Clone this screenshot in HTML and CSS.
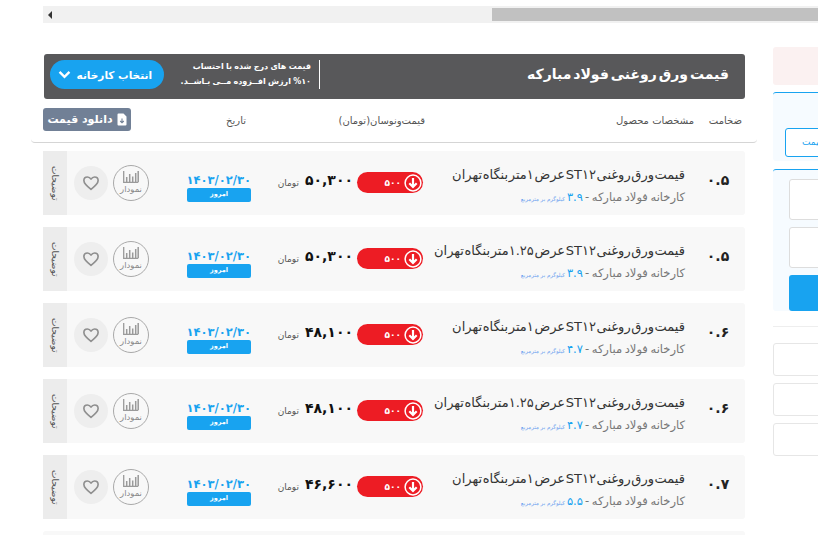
FILE: index.html
```html
<!DOCTYPE html>
<html lang="fa">
<head>
<meta charset="utf-8">
<title>قیمت ورق روغنی فولاد مبارکه</title>
<link rel="stylesheet" href="styles.css">
</head>
<body>
<svg class="defs" width="0" height="0">
  <symbol id="i-heart" viewBox="0 0 24 24"><path d="M12 20.500C5.500 15.600 2.500 12.600 2.500 8.800 2.500 6 4.600 4 7.200 4c1.900 0 3.600 1 4.800 2.900C13.200 5 14.900 4 16.800 4c2.600 0 4.700 2 4.700 4.800 0 3.800-3 6.800-9.500 11.700z" fill="none" stroke="#8f8f8f" stroke-width="2.200" stroke-linejoin="round"/></symbol>
  <symbol id="i-chart" viewBox="0 0 16 12"><path d="M.7 0v11.300h14.600" fill="none" stroke="#9a9a9a" stroke-width="1.300"/><path d="M3.700 6v5M6.700 3v8M9.700 5.500V11M12.700 2v9M15.200 0v11" stroke="#9a9a9a" stroke-width="1.500"/></symbol>
  <symbol id="i-down" viewBox="0 0 18 18"><circle cx="9" cy="9" r="7.900" fill="none" stroke="#fff" stroke-width="1.500"/><path d="M9 4v9M5.300 9.300 9 13l3.700-3.700" fill="none" stroke="#fff" stroke-width="2.200"/></symbol>
</svg>
<div class="hscroll"><span class="hscroll-arrow"></span><span class="hscroll-thumb"></span></div>
<div class="page">
  <main class="main">
    <header class="banner">
      <h1 class="banner-title">قیمت ورق روغنی فولاد مبارکه</h1>
      <div class="banner-note">قیمت های درج شده با احتساب<br>%۱۰ ارزش افــزوده مــی بـاشــد.</div>
      <button class="factory-btn">انتخاب کارخانه
        <svg class="chev" viewBox="0 0 14 10" width="13" height="9"><path d="M1.500 2 7 7.500 12.500 2" fill="none" stroke="#fff" stroke-width="2.600"/></svg>
      </button>
    </header>
    <div class="heads">
      <span class="h-thick">ضخامت</span>
      <span class="h-spec">مشخصات محصول</span>
      <span class="h-price">قیمت‌ونوسان(تومان)</span>
      <span class="h-date">تاریخ</span>
      <button class="dl-btn">
        <svg viewBox="0 0 10 13" width="10" height="13"><path d="M0.500 1.500a1 1 0 0 1 1-1H6.500L9.500 3.500V11.500a1 1 0 0 1-1 1h-7a1 1 0 0 1-1-1z" fill="#fff"/><path d="M5 5.500v4M3.200 8 5 9.800 6.800 8" fill="none" stroke="#718096" stroke-width="1.100"/></svg>
        دانلود قیمت
      </button>
    </div>
    <div class="rows">
      <article class="row">
        <div class="thick">۰.۵</div>
        <div class="spec"><div class="spec-title">قیمت ورق روغنی ST۱۲ عرض ۱متر بنگاه تهران</div><div class="spec-sub">کارخانه فولاد مبارکه -<b>۳.۹</b><small>کیلوگرم بر مترمربع</small></div></div>
        <div class="change"><svg width="18" height="18"><use href="#i-down"/></svg><span>۵۰۰</span></div>
        <div class="price"><strong>۵۰,۳۰۰</strong><small>تومان</small></div>
        <div class="date"><div class="date-val">۱۴۰۳/۰۲/۳۰</div><div class="date-tag">امروز</div></div>
        <div class="chart"><svg width="16" height="12"><use href="#i-chart"/></svg><span>نمودار</span></div>
        <div class="fav"><svg width="18" height="18"><use href="#i-heart"/></svg></div>
        <div class="tab">توضیحات</div>
      </article>
      <article class="row">
        <div class="thick">۰.۵</div>
        <div class="spec"><div class="spec-title">قیمت ورق روغنی ST۱۲ عرض ۱.۲۵متر بنگاه تهران</div><div class="spec-sub">کارخانه فولاد مبارکه -<b>۳.۹</b><small>کیلوگرم بر مترمربع</small></div></div>
        <div class="change"><svg width="18" height="18"><use href="#i-down"/></svg><span>۵۰۰</span></div>
        <div class="price"><strong>۵۰,۳۰۰</strong><small>تومان</small></div>
        <div class="date"><div class="date-val">۱۴۰۳/۰۲/۳۰</div><div class="date-tag">امروز</div></div>
        <div class="chart"><svg width="16" height="12"><use href="#i-chart"/></svg><span>نمودار</span></div>
        <div class="fav"><svg width="18" height="18"><use href="#i-heart"/></svg></div>
        <div class="tab">توضیحات</div>
      </article>
      <article class="row">
        <div class="thick">۰.۶</div>
        <div class="spec"><div class="spec-title">قیمت ورق روغنی ST۱۲ عرض ۱متر بنگاه تهران</div><div class="spec-sub">کارخانه فولاد مبارکه -<b>۴.۷</b><small>کیلوگرم بر مترمربع</small></div></div>
        <div class="change"><svg width="18" height="18"><use href="#i-down"/></svg><span>۵۰۰</span></div>
        <div class="price"><strong>۴۸,۱۰۰</strong><small>تومان</small></div>
        <div class="date"><div class="date-val">۱۴۰۳/۰۲/۳۰</div><div class="date-tag">امروز</div></div>
        <div class="chart"><svg width="16" height="12"><use href="#i-chart"/></svg><span>نمودار</span></div>
        <div class="fav"><svg width="18" height="18"><use href="#i-heart"/></svg></div>
        <div class="tab">توضیحات</div>
      </article>
      <article class="row">
        <div class="thick">۰.۶</div>
        <div class="spec"><div class="spec-title">قیمت ورق روغنی ST۱۲ عرض ۱.۲۵متر بنگاه تهران</div><div class="spec-sub">کارخانه فولاد مبارکه -<b>۴.۷</b><small>کیلوگرم بر مترمربع</small></div></div>
        <div class="change"><svg width="18" height="18"><use href="#i-down"/></svg><span>۵۰۰</span></div>
        <div class="price"><strong>۴۸,۱۰۰</strong><small>تومان</small></div>
        <div class="date"><div class="date-val">۱۴۰۳/۰۲/۳۰</div><div class="date-tag">امروز</div></div>
        <div class="chart"><svg width="16" height="12"><use href="#i-chart"/></svg><span>نمودار</span></div>
        <div class="fav"><svg width="18" height="18"><use href="#i-heart"/></svg></div>
        <div class="tab">توضیحات</div>
      </article>
      <article class="row">
        <div class="thick">۰.۷</div>
        <div class="spec"><div class="spec-title">قیمت ورق روغنی ST۱۲ عرض ۱متر بنگاه تهران</div><div class="spec-sub">کارخانه فولاد مبارکه -<b>۵.۵</b><small>کیلوگرم بر مترمربع</small></div></div>
        <div class="change"><svg width="18" height="18"><use href="#i-down"/></svg><span>۵۰۰</span></div>
        <div class="price"><strong>۴۶,۶۰۰</strong><small>تومان</small></div>
        <div class="date"><div class="date-val">۱۴۰۳/۰۲/۳۰</div><div class="date-tag">امروز</div></div>
        <div class="chart"><svg width="16" height="12"><use href="#i-chart"/></svg><span>نمودار</span></div>
        <div class="fav"><svg width="18" height="18"><use href="#i-heart"/></svg></div>
        <div class="tab">توضیحات</div>
      </article>
      <article class="row row-empty"></article>
    </div>
  </main>
  <aside class="side">
    <div class="side-pink"></div>
    <div class="side-blue side-blue-a"><div class="side-outline">قیمت</div></div>
    <div class="side-blue side-blue-b"><div class="side-input"></div><div class="side-input"></div><div class="side-submit"></div></div>
    <div class="side-rule"></div>
    <div class="side-box"></div>
    <div class="side-box"></div>
    <div class="side-box"></div>
  </aside>
</div>
</body>
</html>
```
FILE: styles.css
```css
html, body { margin: 0; padding: 0; height: 535px; overflow: hidden; background: #fff; }
body { font-family: "DejaVu Sans", "Noto Sans", sans-serif; width: 818px; }
.defs { position: absolute; }
button { font-family: inherit; border: 0; cursor: pointer; }

.hscroll { display: flex; align-items: center; height: 17px; margin: 6px 0 0 43px; background: #f1f1f1; }
.hscroll-arrow { width: 0; height: 0; margin-left: 5px; border: 4px solid transparent; border-left-width: 0; border-right: 4px solid #333; }
.hscroll-thumb { height: 13px; flex: 1; margin-left: 440px; background: #c1c1c1; }

.page { display: flex; align-items: flex-start; gap: 16px; margin-top: 24px; width: 818px; height: 488px; overflow: hidden; padding-left: 31px; box-sizing: border-box; }
.main { width: 726px; flex: none; padding-top: 7px; direction: rtl; }

.banner { display: flex; align-items: center; height: 45px; margin: 0 12px 0 13px; padding: 0 16px 4px 6px; background: #58585a; border-radius: 3px; color: #fff; box-sizing: border-box; }
.banner-title { margin: 0 0 2px; flex: 1; font-size: 14px; font-weight: 700; word-spacing: -3px; white-space: nowrap; }
.banner-note { width: 137px; flex: none; padding-right: 8px; box-sizing: border-box; border-right: 1px solid #fff; font-size: 8px; line-height: 14.500px; font-weight: 700; word-spacing: -0.500px; white-space: nowrap; }
.factory-btn { display: flex; align-items: center; justify-content: space-between; width: 114px; height: 29px; flex: none; margin-right: 19px; padding: 0 12px 0 8px; background: #18a3f0; color: #fff; border-radius: 15px; font-size: 10.500px; font-weight: 700; white-space: nowrap; }

.heads { display: flex; align-items: center; height: 44px; padding: 0 15px 0 12px; border-bottom: 1px solid #d5d5d5; border-radius: 0 0 4px 4px; font-size: 10px; color: #555; box-sizing: border-box; white-space: nowrap; }
.h-thick { width: 48px; flex: none; }
.h-spec { width: 269px; flex: none; }
.h-price { width: 179px; flex: none; }
.h-date { flex: none; }
.dl-btn { display: flex; align-items: center; justify-content: center; width: 88px; height: 23px; flex: none; margin-right: auto; margin-top: -3px; padding: 0; background: #718096; color: #fff; border-radius: 3px; font-size: 11px; font-weight: 700; white-space: nowrap; }
.dl-btn svg { flex: none; margin-left: 4px; }

.rows { display: flex; flex-direction: column; gap: 12px; padding: 8px 12px 0; }
.row { display: flex; align-items: center; height: 64px; flex: none; background: #f8f8f8; border-radius: 3px; }
.thick { width: 60px; flex: none; padding-left: 6px; box-sizing: border-box; text-align: center; font-size: 14px; font-weight: 700; color: #222; margin-top: -7px; white-space: nowrap; }
.spec { width: 262px; flex: none; white-space: nowrap; }
.spec-title { font-size: 13px; line-height: 18px; color: #333; word-spacing: -3.500px; margin-top: 5px; }
.spec-sub { margin-top: 6px; font-size: 11.500px; line-height: 14px; color: #777; word-spacing: -1px; }
.spec-sub b { font-weight: 400; color: #18a3f0; margin-right: 2px; }
.spec-sub small { font-size: 5.500px; color: #6a9fef; margin-right: 2px; word-spacing: 0; }
.change { display: flex; align-items: center; gap: 3px; width: 66px; height: 21px; flex: none; padding: 0 1px 0 0; box-sizing: border-box; background: #ed1c24; border-radius: 11px; color: #fff; font-size: 9px; font-weight: 700; margin-top: -1px; }
.price { display: flex; align-items: center; gap: 6px; width: 106px; flex: none; padding-right: 4px; box-sizing: border-box; margin-top: -2px; }
.price strong { margin-top: -4px; font-size: 14px; color: #111; }
.price small { margin-top: 2px; font-size: 9px; color: #555; }
.date { width: 64px; flex: none; margin-top: 8px; }
.date-val { font-size: 11.500px; line-height: 14px; font-weight: 700; color: #18a3f0; text-align: center; white-space: nowrap; }
.date-tag { height: 14px; margin-top: 1px; background: #18a3f0; border-radius: 2px; color: #fff; font-size: 6.500px; line-height: 12px; font-weight: 700; text-align: center; }
.chart { display: flex; flex-direction: column; align-items: center; justify-content: center; width: 36px; height: 36px; flex: none; margin-right: 38px; border: 1px solid #a9a9a9; border-radius: 50%; box-sizing: border-box; color: #888; font-size: 8.500px; line-height: 10px; margin-top: -1px; }
.chart svg { display: block; margin-bottom: 1px; }
.fav { display: flex; align-items: center; justify-content: center; width: 34px; height: 34px; flex: none; margin-right: 5px; background: #eee; border-radius: 50%; margin-top: -1px; }
.tab { display: flex; align-items: center; justify-content: center; width: 24px; height: 64px; flex: none; margin-right: 7px; background: #ececec; writing-mode: vertical-rl; font-size: 9px; color: #555; }
.row-empty { height: 64px; }

.side { flex: none; width: 120px; }
.side-pink { height: 38px; background: #fbf1f1; border-radius: 3px; }
.side-blue { background: #f6fbff; border-top: 1px solid #18a3f0; border-radius: 3px 0 0 3px; box-sizing: border-box; }
.side-blue-a { height: 69px; margin-top: 7px; padding: 35px 0 0 12px; }
.side-outline { width: 100%; height: 29px; padding-left: 16px; background: #fff; border: 1px solid #18a3f0; border-radius: 3px; box-sizing: border-box; color: #18a3f0; font-size: 9px; line-height: 26px; direction: rtl; text-align: left; }
.side-blue-b { height: 142px; margin-top: 8px; padding: 9px 0 0 16px; }
.side-input { height: 41px; margin-bottom: 7px; background: #fff; border: 1px solid #ddd; border-radius: 3px; box-sizing: border-box; }
.side-submit { height: 36px; background: #18a3f0; border-radius: 3px; }
.side-rule { height: 1px; margin-top: 15px; background: #eee; }
.side-box { height: 33px; margin-top: 7px; border: 1px solid #e6e6e6; border-radius: 3px; box-sizing: border-box; }
.side-rule + .side-box { margin-top: 16px; }
```
